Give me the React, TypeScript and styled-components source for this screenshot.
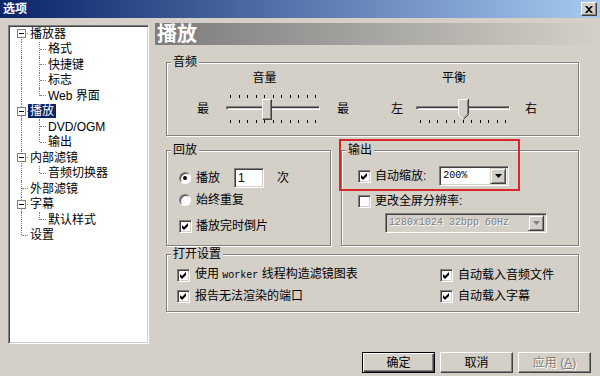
import React from "react"
import styled, { createGlobalStyle, css } from "styled-components"

const GlobalStyle = createGlobalStyle`
    html, body {
        margin: 0;
        padding: 0;
        background: #d4d0c8;
    }

    body {
        font-family: "Liberation Sans", "Noto Sans CJK SC", sans-serif;
        font-size: 12px;
        color: #000;
    }

    * {
        box-sizing: border-box;
    }
`

const Window = styled.div`
    width: 600px;
    height: 376px;
    background: #d4d0c8;
    overflow: hidden;

    display: flex;
    flex-flow: column;
`

const TitleBar = styled.div`
    flex: none;
    height: 18px;
    padding: 0 3px;
    background: linear-gradient(to right, #0a246a, #a6caf0);

    display: flex;
    flex-flow: row nowrap;
    align-items: center;
    justify-content: space-between;
`

const TitleText = styled.span`
    color: #fff;
    font-weight: bold;
    font-size: 12px;
    line-height: 14px;
`

const CloseButton = styled.div`
    width: 16px;
    height: 14px;
    background: #d4d0c8;
    border: 1px solid;
    border-color: #fff #404040 #404040 #fff;
    box-shadow: inset -1px -1px 0 #808080;

    display: flex;
    align-items: center;
    justify-content: center;
`

const Body = styled.div`
    flex: 1;
    min-height: 0;
    padding: 5px 0 0 8px;

    display: flex;
    flex-flow: row nowrap;
    align-items: flex-start;
`

/* ---------- tree ---------- */

const Tree = styled.div`
    flex: none;
    width: 141px;
    height: 319px;
    margin-top: 2px;
    padding-left: 3px;
    background: #fff;
    border: 1px solid;
    border-color: #808080 #fff #fff #808080;
    box-shadow: inset 1px 1px 0 #404040, inset -1px -1px 0 #d4d0c8;

    display: flex;
    flex-flow: column;
`

const TreeRow = styled.div`
    height: 15.5px;

    display: flex;
    flex-flow: row nowrap;
    align-items: center;
`

const RootRail = styled.span<{ $pos: "first" | "mid" | "last"; $stub: boolean }>`
    position: relative;
    flex: none;
    width: 16px;
    height: 100%;

    &::before {
        content: "";
        position: absolute;
        left: 9px;
        top: ${p => (p.$pos === "first" ? "7px" : "0")};
        bottom: ${p => (p.$pos === "last" ? "8px" : "0")};
        border-left: 1px dotted #808080;
    }

    &::after {
        content: "";
        display: ${p => (p.$stub ? "block" : "none")};
        position: absolute;
        left: 10px;
        width: 6px;
        top: 7px;
        border-top: 1px dotted #808080;
    }
`

const ChildRail = styled.span<{ $last: boolean }>`
    position: relative;
    flex: none;
    width: 18px;
    height: 100%;

    &::before {
        content: "";
        position: absolute;
        left: 11px;
        top: 0;
        bottom: ${p => (p.$last ? "8px" : "0")};
        border-left: 1px dotted #808080;
    }

    &::after {
        content: "";
        position: absolute;
        left: 12px;
        width: 6px;
        top: 7px;
        border-top: 1px dotted #808080;
    }
`

const ExpandBox = styled.span`
    position: absolute;
    z-index: 1;
    left: 5px;
    top: 3px;
    width: 9px;
    height: 9px;
    background: #fff;
    border: 1px solid #808080;

    &::after {
        content: "";
        position: absolute;
        left: 1px;
        top: 3px;
        width: 5px;
        height: 1px;
        background: #000;
    }
`

const ItemLabel = styled.span<{ $selected?: boolean }>`
    padding: 0 2px;
    line-height: 14px;
    white-space: nowrap;
    color: ${p => (p.$selected ? "#fff" : "#000")};
    background: ${p => (p.$selected ? "#0a246a" : "transparent")};
`

/* ---------- right side ---------- */

const RightPanel = styled.div`
    flex: none;
    width: 445px;
    margin-left: 6px;

    display: flex;
    flex-flow: column;
`

const PageHeader = styled.div`
    height: 22px;
    padding-left: 2px;
    background: linear-gradient(to right, #7c7c7c, #d4d0c8);
    color: #fff;
    font-size: 20px;
    font-weight: bold;
    line-height: 22px;
`

const Groups = styled.div`
    width: 413px;
    margin-left: 11px;

    display: flex;
    flex-flow: column;
`

const Group = styled.div<{ $h: number; $mt: number; $w?: number }>`
    position: relative;
    height: ${p => p.$h}px;
    width: ${p => (p.$w ? `${p.$w}px` : "auto")};
    margin-top: ${p => p.$mt}px;
    border: 1px solid #808080;
    box-shadow: inset 1px 1px 0 #fff, 1px 1px 0 #fff;
`

const Legend = styled.span`
    position: absolute;
    top: -8px;
    left: 4px;
    padding: 0 2px;
    background: #d4d0c8;
    line-height: 14px;
`

const AudioContent = styled.div`
    padding: 8px 0 0 30px;

    display: flex;
    flex-flow: row nowrap;
`

const SliderBlock = styled.div<{ $ml: number; $shift: number }>`
    margin-left: ${p => p.$ml}px;

    display: flex;
    flex-flow: column;
`

const Caption = styled.div<{ $shift: number }>`
    line-height: 14px;
    text-align: center;
    padding-right: ${p => p.$shift}px;
`

const SliderRow = styled.div<{ $gapL: number; $gapR: number }>`
    margin-top: 8px;

    display: flex;
    flex-flow: row nowrap;
    align-items: center;

    & > span:first-child {
        margin-right: ${p => p.$gapL}px;
    }

    & > span:last-child {
        margin-left: ${p => p.$gapR}px;
    }
`

const EndLabel = styled.span`
    width: 12px;
    line-height: 14px;
`

const Slider = styled.div`
    position: relative;
    width: 94px;
    height: 31px;
    padding-top: 2px;

    display: flex;
    flex-flow: column;
`

const TickRow = styled.div<{ $hidden?: boolean }>`
    height: 3px;
    padding: 0 4px;
    visibility: ${p => (p.$hidden ? "hidden" : "visible")};

    display: flex;
    flex-flow: row nowrap;
    justify-content: space-between;

    & i {
        width: 1px;
        height: 3px;
        background: #000;
    }
`

const Track = styled.div`
    height: 4px;
    margin: 8px 0 10px;
    background: #d4d0c8;
    border: 1px solid;
    border-color: #808080 #fff #fff #808080;
    box-shadow: inset 1px 1px 0 #404040;
`

const Thumb = styled.div<{ $x: number }>`
    position: absolute;
    left: ${p => p.$x}px;
    top: 6px;
    width: 10px;
    height: 21px;
    background: #d4d0c8;
    border: 1px solid;
    border-color: #fff #404040 #404040 #fff;
    box-shadow: inset -1px -1px 0 #808080;
`

const PointThumb = styled.svg<{ $x: number }>`
    position: absolute;
    left: ${p => p.$x}px;
    top: 6px;
`

const SplitRow = styled.div`
    margin-top: 14px;

    display: flex;
    flex-flow: row nowrap;
    gap: 10px;
`

const OptionList = styled.div<{ $pt: number; $pl: number }>`
    padding: ${p => p.$pt}px 0 0 ${p => p.$pl}px;

    display: flex;
    flex-flow: column;
`

const OptionRow = styled.div<{ $mt?: number; $ml?: number }>`
    height: 20px;
    margin-top: ${p => p.$mt || 0}px;
    margin-left: ${p => p.$ml || 0}px;
    white-space: nowrap;

    display: flex;
    flex-flow: row nowrap;
    align-items: center;
`

const OptionText = styled.span<{ $ml?: number }>`
    margin-left: ${p => (p.$ml === undefined ? 4 : p.$ml)}px;
    line-height: 14px;
`

const Mono = styled.span`
    font-family: "Liberation Mono", "Noto Sans CJK SC", monospace;
    font-size: 10px;
`

const CheckBox = styled.span`
    flex: none;
    width: 13px;
    height: 13px;
    background: #fff;
    border: 1px solid;
    border-color: #808080 #fff #fff #808080;
    box-shadow: inset 1px 1px 0 #404040, inset -1px -1px 0 #d4d0c8;

    display: flex;
    align-items: center;
    justify-content: center;
`

const Radio = styled.span<{ $checked?: boolean }>`
    flex: none;
    width: 12px;
    height: 12px;
    border-radius: 50%;
    background: #fff;
    border: 1px solid;
    border-color: #808080 #fff #fff #808080;
    box-shadow: inset 1px 1px 0 #404040;

    display: flex;
    align-items: center;
    justify-content: center;

    &::after {
        content: "";
        width: 4px;
        height: 4px;
        border-radius: 50%;
        background: ${p => (p.$checked ? "#000" : "transparent")};
    }
`

const SpinInput = styled.div`
    width: 30px;
    height: 20px;
    margin-left: 14px;
    padding-left: 3px;
    background: #fff;
    border: 1px solid;
    border-color: #808080 #fff #fff #808080;
    box-shadow: inset 1px 1px 0 #404040, inset -1px -1px 0 #d4d0c8;
    line-height: 18px;
`

const Combo = styled.div<{ $w: number; $ml: number; $disabled?: boolean }>`
    width: ${p => p.$w}px;
    height: 20px;
    margin-left: ${p => p.$ml}px;
    padding: 2px;
    background: ${p => (p.$disabled ? "#d4d0c8" : "#fff")};
    border: 1px solid;
    border-color: #808080 #fff #fff #808080;
    box-shadow: inset 1px 1px 0 #404040, inset -1px -1px 0 #d4d0c8;

    display: flex;
    flex-flow: row nowrap;
    align-items: center;
`

const ComboValue = styled.span<{ $disabled?: boolean }>`
    flex: 1;
    padding-left: 1px;
    font-family: "Liberation Mono", "Noto Sans CJK SC", monospace;
    font-size: 10px;
    line-height: 14px;
    white-space: nowrap;
    color: ${p => (p.$disabled ? "#808080" : "#000")};
    text-shadow: ${p => (p.$disabled ? "1px 1px 0 #fff" : "none")};
`

const ComboButton = styled.span`
    flex: none;
    width: 16px;
    height: 16px;
    background: #d4d0c8;
    border: 1px solid;
    border-color: #d4d0c8 #404040 #404040 #d4d0c8;
    box-shadow: inset 1px 1px 0 #fff, inset -1px -1px 0 #808080;

    display: flex;
    align-items: center;
    justify-content: center;
`

const Highlight = styled.div`
    position: absolute;
    left: -3px;
    top: -12px;
    width: 181px;
    height: 52px;
    border: 2px solid #d8262b;
    pointer-events: none;
`

const OpenGrid = styled.div`
    padding: 10px 0 0 10px;

    display: grid;
    grid-template-columns: 263px auto;
    grid-auto-rows: 20px;
    row-gap: 1px;
`

const ButtonRow = styled.div`
    margin: 40px 0 0 207px;

    display: flex;
    flex-flow: row nowrap;
    gap: 5px;
`

const Button = styled.div<{ $default?: boolean; $disabled?: boolean }>`
    width: 73px;
    height: 21px;
    background: #d4d0c8;
    border: 1px solid;
    border-color: #fff #404040 #404040 #fff;
    box-shadow: inset -1px -1px 0 #808080;
    line-height: 14px;
    color: ${p => (p.$disabled ? "#808080" : "#000")};
    text-shadow: ${p => (p.$disabled ? "1px 1px 0 #fff" : "none")};

    display: flex;
    align-items: center;
    justify-content: center;

    ${p =>
        p.$default &&
        css`
            border-color: #000;
            box-shadow: inset 1px 1px 0 #fff, inset -1px -1px 0 #404040, inset -2px -2px 0 #808080;
        `}
`

/* ---------- pieces ---------- */

const Check = () => (
    <svg width="7" height="7" viewBox="0 0 7 7">
        <path d="M0 2 L2 4 L6 0 L6 3 L2 7 L0 5 Z" fill="#000" />
    </svg>
)

const Arrow = ({ color = "#000" }: { color?: string }) => (
    <svg width="7" height="4" viewBox="0 0 7 4">
        <path d="M0 0 H7 L3.5 4 Z" fill={color} />
    </svg>
)

const ticks = Array.from({ length: 11 })

const Ticks = ({ hidden }: { hidden?: boolean }) => (
    <TickRow $hidden={hidden}>
        {ticks.map((_, i) => (
            <i key={i} />
        ))}
    </TickRow>
)

type TreeNode = {
    label: string
    level: 0 | 1
    expanded?: boolean
    last?: boolean
    selected?: boolean
}

const nodes: TreeNode[] = [
    { label: "播放器", level: 0, expanded: true },
    { label: "格式", level: 1 },
    { label: "快捷键", level: 1 },
    { label: "标志", level: 1 },
    { label: "Web 界面", level: 1, last: true },
    { label: "播放", level: 0, expanded: true, selected: true },
    { label: "DVD/OGM", level: 1 },
    { label: "输出", level: 1, last: true },
    { label: "内部滤镜", level: 0, expanded: true },
    { label: "音频切换器", level: 1, last: true },
    { label: "外部滤镜", level: 0 },
    { label: "字幕", level: 0, expanded: true },
    { label: "默认样式", level: 1, last: true },
    { label: "设置", level: 0 },
]

const App = () => {
    return (
        <>
            <GlobalStyle />
            <Window>
                <TitleBar>
                    <TitleText>选项</TitleText>
                    <CloseButton>
                        <svg width="8" height="7" viewBox="0 0 8 7">
                            <path d="M0 0 H2 L4 2 L6 0 H8 L5 3.5 L8 7 H6 L4 5 L2 7 H0 L3 3.5 Z" fill="#000" />
                        </svg>
                    </CloseButton>
                </TitleBar>

                <Body>
                    <Tree>
                        {nodes.map((n, i) => (
                            <TreeRow key={n.label}>
                                <RootRail
                                    $pos={i === 0 ? "first" : i === nodes.length - 1 ? "last" : "mid"}
                                    $stub={n.level === 0}
                                >
                                    {n.expanded && <ExpandBox />}
                                </RootRail>
                                {n.level === 1 && <ChildRail $last={!!n.last} />}
                                <ItemLabel $selected={n.selected}>{n.label}</ItemLabel>
                            </TreeRow>
                        ))}
                    </Tree>

                    <RightPanel>
                        <PageHeader>播放</PageHeader>

                        <Groups>
                            <Group $h={74} $mt={17}>
                                <Legend>音频</Legend>
                                <AudioContent>
                                    <SliderBlock $ml={0} $shift={17}>
                                        <Caption $shift={17}>音量</Caption>
                                        <SliderRow $gapL={17} $gapR={17}>
                                            <EndLabel>最</EndLabel>
                                            <Slider>
                                                <Ticks />
                                                <Track />
                                                <Ticks />
                                                <Thumb $x={36} />
                                            </Slider>
                                            <EndLabel>最</EndLabel>
                                        </SliderRow>
                                    </SliderBlock>

                                    <SliderBlock $ml={42} $shift={20}>
                                        <Caption $shift={20}>平衡</Caption>
                                        <SliderRow $gapL={13} $gapR={15}>
                                            <EndLabel>左</EndLabel>
                                            <Slider>
                                                <Ticks hidden />
                                                <Track />
                                                <Ticks />
                                                <PointThumb $x={42} width="11" height="21" viewBox="0 0 11 21">
                                                    <path d="M0 0 H11 V15.5 L5.5 21 L0 15.5 Z" fill="#d4d0c8" />
                                                    <polyline points="0.5,15.5 0.5,0.5 10,0.5" fill="none" stroke="#fff" />
                                                    <polyline points="0.5,15.5 5.5,20.5" fill="none" stroke="#fff" />
                                                    <polyline points="10.5,0 10.5,15.5 5.5,20.5" fill="none" stroke="#404040" />
                                                    <polyline points="9.5,1 9.5,15 5.5,19" fill="none" stroke="#808080" />
                                                </PointThumb>
                                            </Slider>
                                            <EndLabel>右</EndLabel>
                                        </SliderRow>
                                    </SliderBlock>
                                </AudioContent>
                            </Group>

                            <SplitRow>
                                <Group $h={96} $mt={0} $w={165}>
                                    <Legend>回放</Legend>
                                    <OptionList $pt={17} $pl={12}>
                                        <OptionRow>
                                            <Radio $checked />
                                            <OptionText $ml={5}>播放</OptionText>
                                            <SpinInput>1</SpinInput>
                                            <OptionText $ml={13}>次</OptionText>
                                        </OptionRow>
                                        <OptionRow $mt={2}>
                                            <Radio />
                                            <OptionText $ml={5}>始终重复</OptionText>
                                        </OptionRow>
                                        <OptionRow $mt={6}>
                                            <CheckBox>
                                                <Check />
                                            </CheckBox>
                                            <OptionText>播放完时倒片</OptionText>
                                        </OptionRow>
                                    </OptionList>
                                </Group>

                                <Group $h={96} $mt={0} $w={238}>
                                    <Legend>输出</Legend>
                                    <OptionList $pt={15} $pl={16}>
                                        <OptionRow>
                                            <CheckBox>
                                                <Check />
                                            </CheckBox>
                                            <OptionText>自动缩放:</OptionText>
                                            <Combo $w={70} $ml={13}>
                                                <ComboValue>200%</ComboValue>
                                                <ComboButton>
                                                    <Arrow />
                                                </ComboButton>
                                            </Combo>
                                        </OptionRow>
                                        <OptionRow $mt={5}>
                                            <CheckBox />
                                            <OptionText>更改全屏分辨率:</OptionText>
                                        </OptionRow>
                                        <OptionRow $mt={2} $ml={27}>
                                            <Combo $w={162} $ml={0} $disabled>
                                                <ComboValue $disabled>1280x1024 32bpp 60Hz</ComboValue>
                                                <ComboButton>
                                                    <Arrow color="#808080" />
                                                </ComboButton>
                                            </Combo>
                                        </OptionRow>
                                    </OptionList>
                                    <Highlight />
                                </Group>
                            </SplitRow>

                            <Group $h={58} $mt={8}>
                                <Legend>打开设置</Legend>
                                <OpenGrid>
                                    <OptionRow>
                                        <CheckBox>
                                            <Check />
                                        </CheckBox>
                                        <OptionText $ml={5}>
                                            使用 <Mono>worker</Mono> 线程构造滤镜图表
                                        </OptionText>
                                    </OptionRow>
                                    <OptionRow>
                                        <CheckBox>
                                            <Check />
                                        </CheckBox>
                                        <OptionText $ml={5}>自动载入音频文件</OptionText>
                                    </OptionRow>
                                    <OptionRow>
                                        <CheckBox>
                                            <Check />
                                        </CheckBox>
                                        <OptionText $ml={5}>报告无法渲染的端口</OptionText>
                                    </OptionRow>
                                    <OptionRow>
                                        <CheckBox>
                                            <Check />
                                        </CheckBox>
                                        <OptionText $ml={5}>自动载入字幕</OptionText>
                                    </OptionRow>
                                </OpenGrid>
                            </Group>
                        </Groups>

                        <ButtonRow>
                            <Button $default>确定</Button>
                            <Button>取消</Button>
                            <Button $disabled>
                                应用 (<u>A</u>)
                            </Button>
                        </ButtonRow>
                    </RightPanel>
                </Body>
            </Window>
        </>
    )
}

export default App
